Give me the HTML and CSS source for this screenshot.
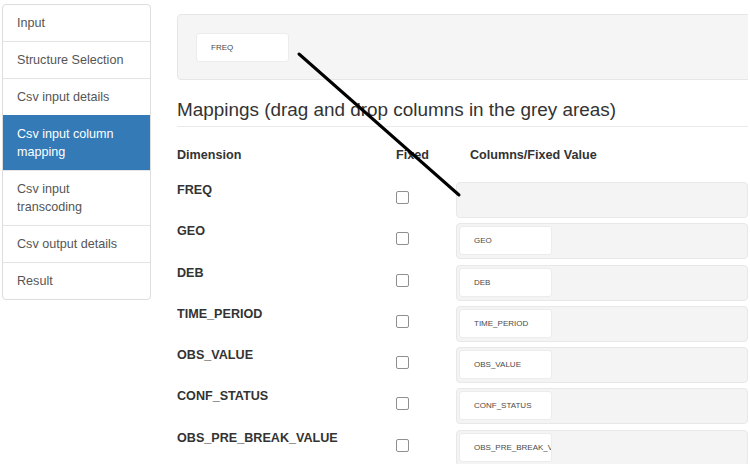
FILE: index.html
```html
<!DOCTYPE html>
<html>
<head>
<meta charset="utf-8">
<title>Csv input column mapping</title>
<link rel="stylesheet" href="styles.css">
</head>
<body>
<div class="page">
  <nav class="steps">
    <div class="step">Input</div>
    <div class="step">Structure Selection</div>
    <div class="step">Csv input details</div>
    <div class="step active">Csv input column mapping</div>
    <div class="step">Csv input transcoding</div>
    <div class="step">Csv output details</div>
    <div class="step">Result</div>
  </nav>
  <main class="main">
    <div class="well">
      <div class="chip">FREQ</div>
    </div>
    <h3 class="title">Mappings (drag and drop columns in the grey areas)</h3>
    <div class="grid">
      <div class="head">Dimension</div>
      <div class="head">Fixed</div>
      <div class="head head-col">Columns/Fixed Value</div>

      <div class="dim">FREQ</div>
      <div class="fix"><input type="checkbox"></div>
      <div class="zone"></div>

      <div class="dim">GEO</div>
      <div class="fix"><input type="checkbox"></div>
      <div class="zone"><div class="chip">GEO</div></div>

      <div class="dim">DEB</div>
      <div class="fix"><input type="checkbox"></div>
      <div class="zone"><div class="chip">DEB</div></div>

      <div class="dim">TIME_PERIOD</div>
      <div class="fix"><input type="checkbox"></div>
      <div class="zone"><div class="chip">TIME_PERIOD</div></div>

      <div class="dim">OBS_VALUE</div>
      <div class="fix"><input type="checkbox"></div>
      <div class="zone"><div class="chip">OBS_VALUE</div></div>

      <div class="dim">CONF_STATUS</div>
      <div class="fix"><input type="checkbox"></div>
      <div class="zone"><div class="chip">CONF_STATUS</div></div>

      <div class="dim">OBS_PRE_BREAK_VALUE</div>
      <div class="fix"><input type="checkbox"></div>
      <div class="zone"><div class="chip">OBS_PRE_BREAK_VALUE</div></div>
    </div>
  </main>
</div>
<svg class="drag-line" width="750" height="464" viewBox="0 0 750 464">
  <line x1="299" y1="54" x2="459" y2="195" stroke="#000" stroke-width="3" stroke-linecap="round"/>
</svg>
</body>
</html>
```

FILE: styles.css
```css
html, body {
  margin: 0;
  padding: 0;
  background: #fff;
  width: 750px;
  height: 464px;
  overflow: hidden;
  font-family: "Liberation Sans", Arial, sans-serif;
  color: #333;
}

.page {
  display: flex;
  align-items: flex-start;
  width: 750px;
}

.steps {
  width: 147px;
  flex: none;
  margin: 4px 0 0 2px;
  border: 1px solid #ddd;
  border-radius: 4px;
  overflow: hidden;
}

.step {
  padding: 9px 14px 9px 14px;
  font-size: 12.6px;
  line-height: 18px;
  color: #555;
  border-top: 1px solid #e4e4e4;
}

.step:first-child {
  border-top: none;
}

.step.active {
  background: #337ab7;
  color: #fff;
  border-top-color: #337ab7;
}

.main {
  flex: 1;
  min-width: 0;
  margin: 14px 2px 0 26px;
  overflow: hidden;
}

.well {
  height: 66px;
  margin-right: -20px;
  box-sizing: border-box;
  padding: 18px 18px;
  background: #f5f5f5;
  border: 1px solid #e6e6e6;
  border-radius: 4px;
}

.chip {
  width: 93px;
  height: 29px;
  box-sizing: border-box;
  display: flex;
  align-items: center;
  padding-left: 14px;
  background: #fff;
  border: 1px solid #ececec;
  border-radius: 3px;
  font-size: 8px;
  color: #4a4a4a;
  white-space: nowrap;
  overflow: hidden;
}

.title {
  margin: 19px 0 0 0;
  padding-bottom: 5px;
  font-size: 18.9px;
  line-height: 22px;
  font-weight: normal;
  color: #333;
  border-bottom: 1px solid #eaeaea;
}

.grid {
  display: grid;
  grid-template-columns: 219px 60px 1fr;
  grid-auto-rows: 41.3px;
  grid-template-rows: 55px;
}

.head {
  display: flex;
  align-items: center;
  font-size: 12.6px;
  font-weight: bold;
  color: #333;
}

.head-col {
  padding-left: 14px;
}

.dim {
  font-size: 12.6px;
  font-weight: bold;
  line-height: 16px;
  color: #333;
}

.fix input {
  appearance: none;
  -webkit-appearance: none;
  display: block;
  margin: 9px 0 0 0;
  width: 13px;
  height: 13px;
  box-sizing: border-box;
  border: 1px solid #8f8f8f;
  border-radius: 2px;
  background: #fff;
}

.zone {
  height: 36px;
  box-sizing: border-box;
  padding: 2px;
  background: #f4f4f4;
  border: 1px solid #e8e8e8;
  border-radius: 4px;
}

.drag-line {
  position: absolute;
  left: 0;
  top: 0;
  pointer-events: none;
}
```
